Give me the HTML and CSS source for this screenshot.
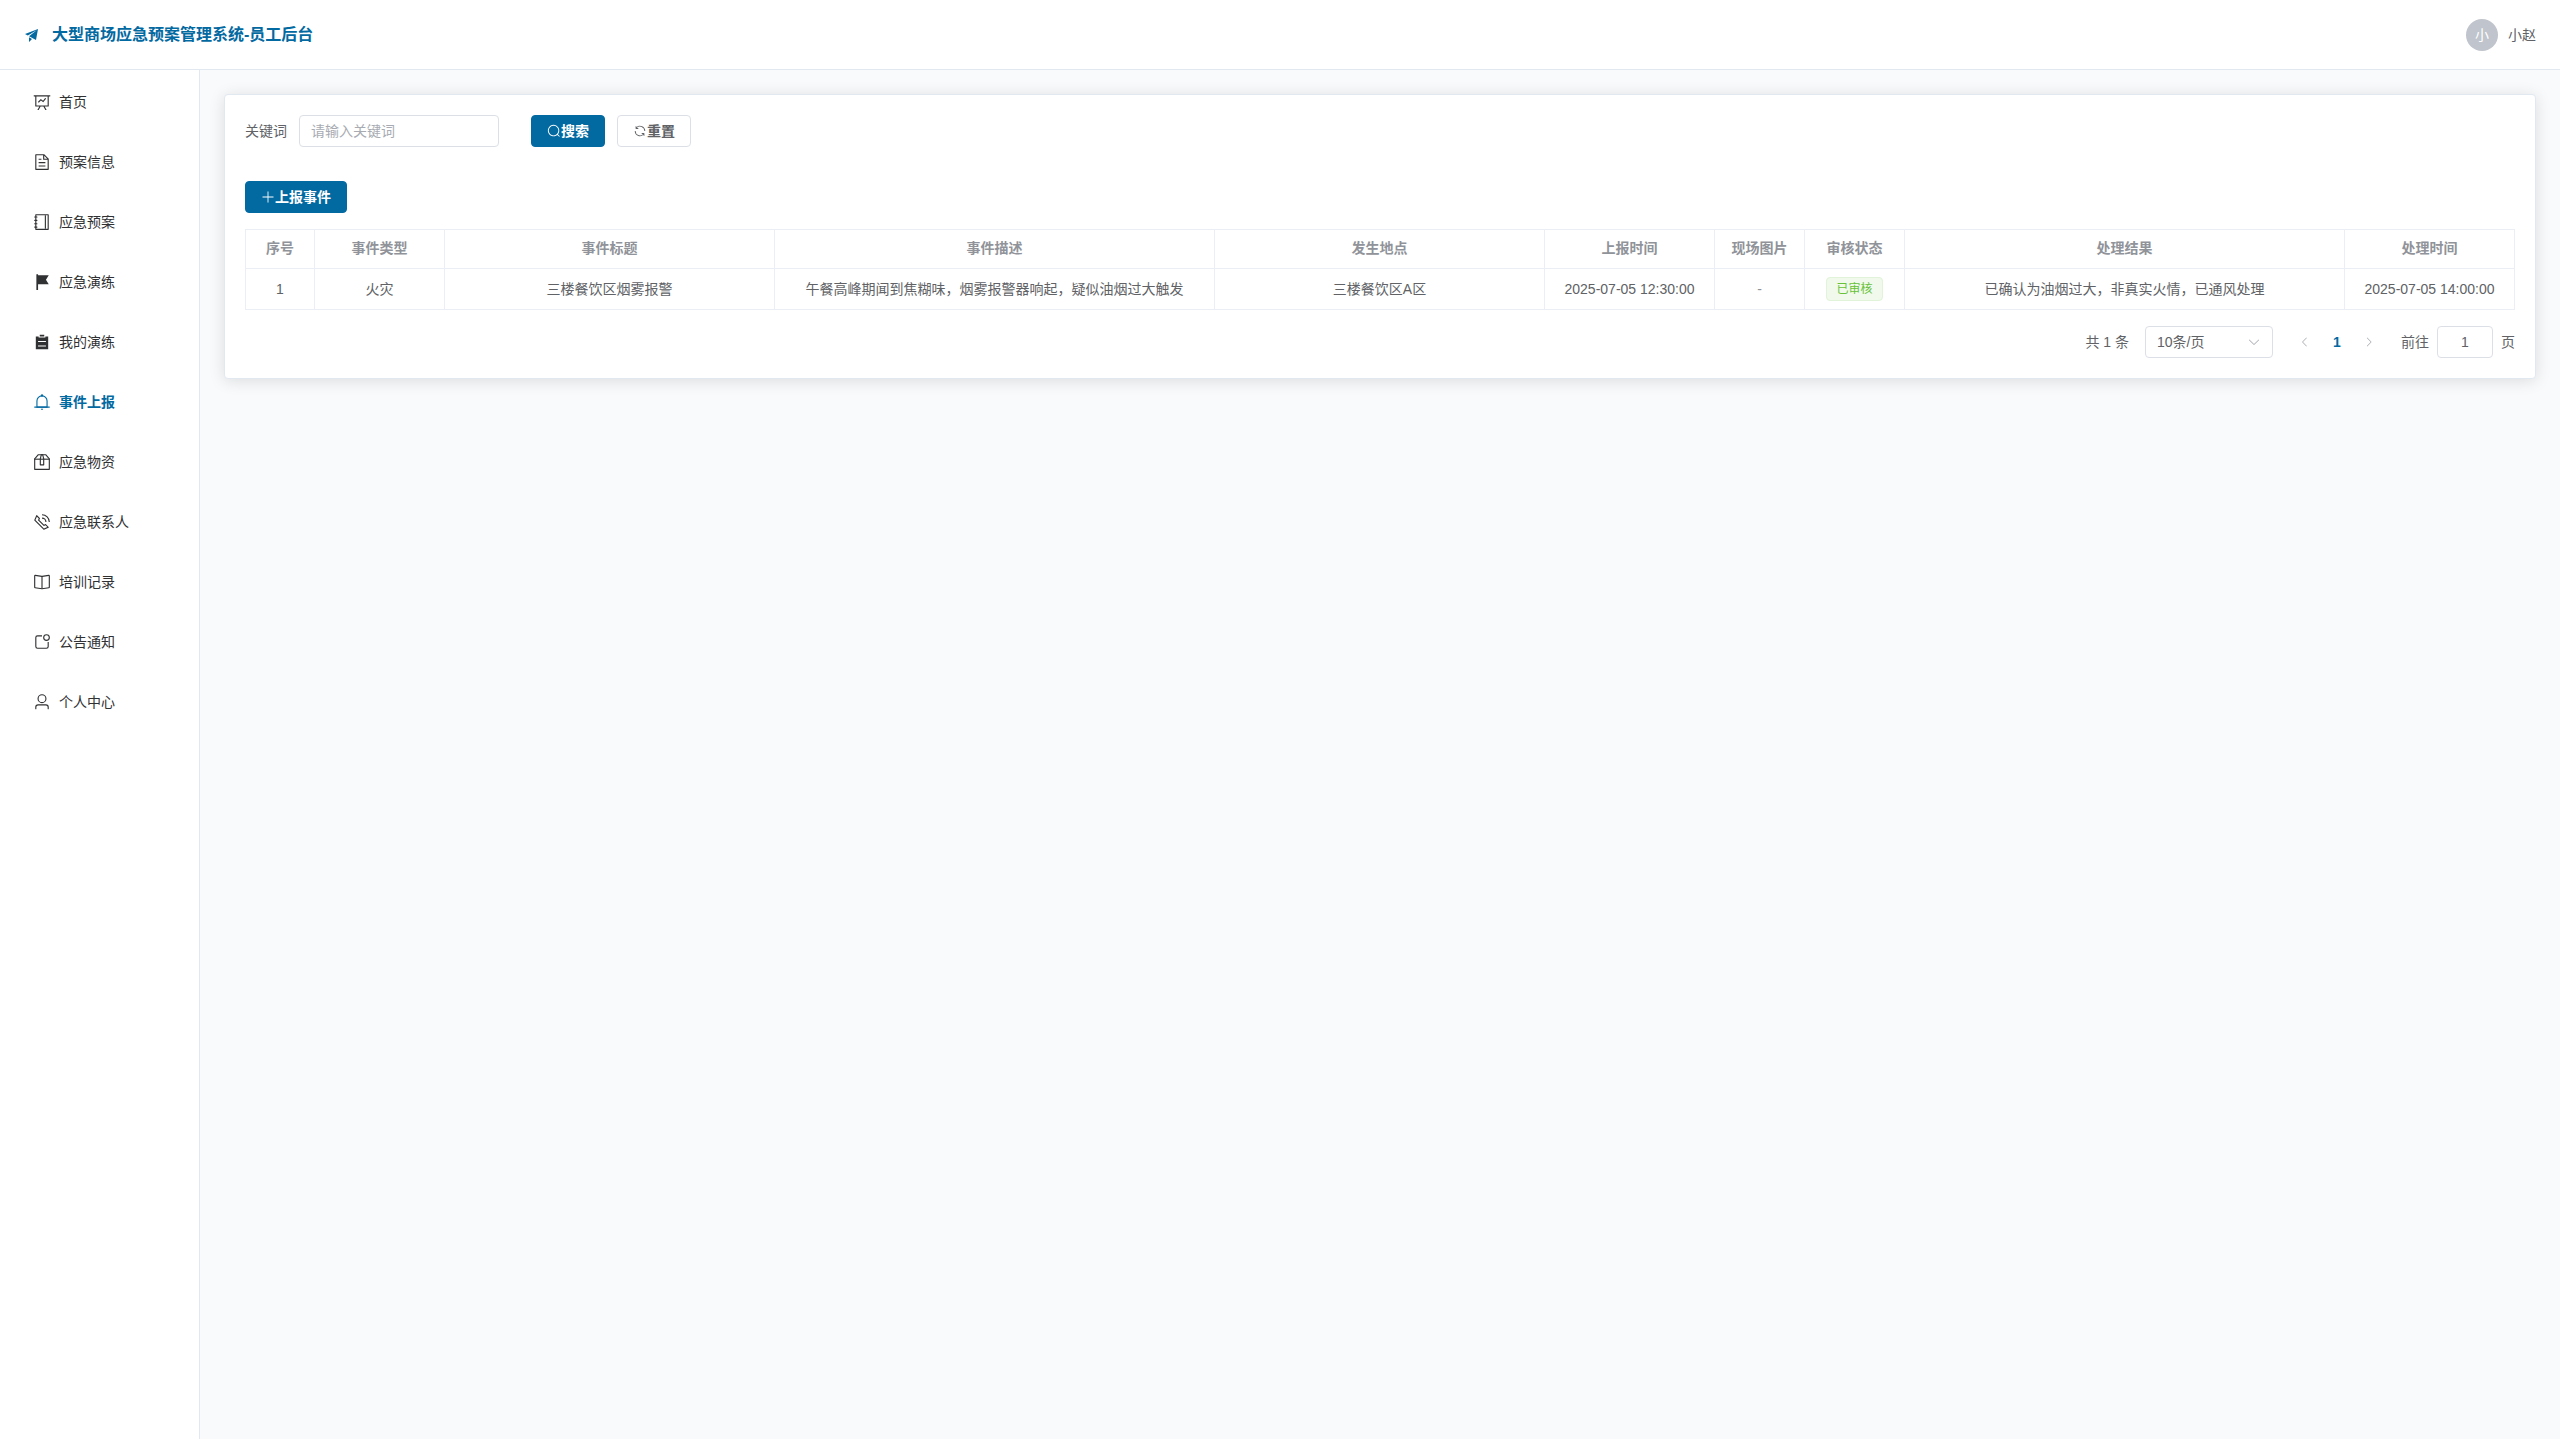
FILE: index.html
```html
<!DOCTYPE html>
<html lang="zh-CN">
<head>
<meta charset="utf-8">
<title>大型商场应急预案管理系统-员工后台</title>
<link rel="stylesheet" href="styles.css">
</head>
<body>
<div class="app">
  <header class="header">
    <div class="brand">
      <svg class="icon icon-brand" viewBox="0 0 1024 1024"><path d="m64 448 832-320-128 704-446.08-243.328L832 192 242.816 545.536zm256 512V657.024L512 768z"/></svg>
      <h1 class="brand-title">大型商场应急预案管理系统-员工后台</h1>
    </div>
    <div class="user"><span class="avatar">小</span><span>小赵</span></div>
  </header>
  <div class="body">
    <nav class="sidebar">
      <a class="menu-item" href="#"><svg class="icon icon-menu" viewBox="0 0 1024 1024"><path d="M359.168 768H160a32 32 0 0 1-32-32V192H64a32 32 0 0 1 0-64h896a32 32 0 1 1 0 64h-64v544a32 32 0 0 1-32 32H665.216l110.848 192h-73.856L591.36 768H433.024L322.176 960H248.32zM832 192H192v512h640zM342.656 534.656a32 32 0 1 1-45.312-45.312L444.992 341.76l125.44 94.08L679.04 300.032a32 32 0 1 1 49.92 39.936L581.632 524.224 451.008 426.24 342.656 534.592z"/></svg>首页</a>
      <a class="menu-item" href="#"><svg class="icon icon-menu" viewBox="0 0 1024 1024"><path d="M832 384H576V128H192v768h640zm-26.496-64L640 154.496V320zM160 64h480l256 256v608a32 32 0 0 1-32 32H160a32 32 0 0 1-32-32V96a32 32 0 0 1 32-32m160 448h384v64H320zm0-192h160v64H320zm0 384h384v64H320z"/></svg>预案信息</a>
      <a class="menu-item" href="#"><svg class="icon icon-menu" viewBox="0 0 1024 1024"><path d="M192 128v768h640V128zm-32-64h704a32 32 0 0 1 32 32v832a32 32 0 0 1-32 32H160a32 32 0 0 1-32-32V96a32 32 0 0 1 32-32"/><path d="M672 128h64v768h-64zM96 192h128q32 0 32 32t-32 32H96q-32 0-32-32t32-32m0 192h128q32 0 32 32t-32 32H96q-32 0-32-32t32-32m0 192h128q32 0 32 32t-32 32H96q-32 0-32-32t32-32m0 192h128q32 0 32 32t-32 32H96q-32 0-32-32t32-32"/></svg>应急预案</a>
      <a class="menu-item" href="#"><svg class="icon icon-menu" viewBox="0 0 1024 1024"><path d="M288 128h608L736 384l160 256H288v320h-96V64h96z"/></svg>应急演练</a>
      <a class="menu-item" href="#"><svg class="icon icon-menu" viewBox="0 0 1024 1024"><path d="M704 192h160v736H160V192h160v64h384zM288 512h448v-64H288zm0 256h448v-64H288zm96-576V96h256v96z"/></svg>我的演练</a>
      <a class="menu-item active" href="#" aria-current="page"><svg class="icon icon-menu" viewBox="0 0 1024 1024"><path d="M512 64a64 64 0 0 1 64 64v64H448v-64a64 64 0 0 1 64-64"/><path d="M256 768h512V448a256 256 0 1 0-512 0zm256-640a320 320 0 0 1 320 320v384H192V448a320 320 0 0 1 320-320"/><path d="M96 768h832q32 0 32 32t-32 32H96q-32 0-32-32t32-32m352 128h128a64 64 0 0 1-128 0"/></svg>事件上报</a>
      <a class="menu-item" href="#"><svg class="icon icon-menu" viewBox="0 0 1024 1024"><path d="M317.056 128 128 344.064V896h768V344.064L706.944 128zm-14.528-64h418.944a32 32 0 0 1 24.064 10.88l206.528 236.096A32 32 0 0 1 960 332.032V928a32 32 0 0 1-32 32H96a32 32 0 0 1-32-32V332.032a32 32 0 0 1 7.936-21.12L278.4 75.008A32 32 0 0 1 302.528 64"/><path d="M64 320h896v64H64z"/><path d="M448 327.872V640h128V327.872L526.08 128h-28.16zM448 64h128l64 256v352a32 32 0 0 1-32 32H416a32 32 0 0 1-32-32V320z"/></svg>应急物资</a>
      <a class="menu-item" href="#"><svg class="icon icon-menu" viewBox="0 0 1024 1024"><path d="M79.36 432.256 591.744 944.64a32 32 0 0 0 35.2 6.784l253.44-108.544a32 32 0 0 0 9.984-52.032l-153.856-153.92a32 32 0 0 0-36.928-6.016l-69.888 34.944L358.08 394.24l35.008-69.888a32 32 0 0 0-5.952-36.928L233.152 133.568a32 32 0 0 0-52.032 10.048L72.512 397.056a32 32 0 0 0 6.784 35.2zm60.48-29.952 81.536-190.08L325.568 316.48l-24.64 49.216-20.608 41.216 32.576 32.64 271.552 271.552 32.64 32.64 41.216-20.672 49.28-24.576 104.192 104.128-190.08 81.472zM512 320v-64a256 256 0 0 1 256 256h-64a192 192 0 0 0-192-192m0-192V64a448 448 0 0 1 448 448h-64a384 384 0 0 0-384-384"/></svg>应急联系人</a>
      <a class="menu-item" href="#"><svg class="icon icon-menu" viewBox="0 0 1024 1024"><path d="m512 863.36 384-54.848v-638.72L525.568 222.72a96 96 0 0 1-27.136 0L128 169.792v638.72zM137.024 106.432l370.432 52.928a32 32 0 0 0 9.088 0l370.432-52.928A64 64 0 0 1 960 169.792v638.72a64 64 0 0 1-54.976 63.36l-388.48 55.488a32 32 0 0 1-9.088 0l-388.48-55.488A64 64 0 0 1 64 808.512v-638.72a64 64 0 0 1 73.024-63.36"/><path d="M480 192h64v704h-64z"/></svg>培训记录</a>
      <a class="menu-item" href="#"><svg class="icon icon-menu" viewBox="0 0 1024 1024"><path d="M512 128v64H256a64 64 0 0 0-64 64v512a64 64 0 0 0 64 64h512a64 64 0 0 0 64-64V512h64v256a128 128 0 0 1-128 128H256a128 128 0 0 1-128-128V256a128 128 0 0 1 128-128z"/><path d="M768 384a128 128 0 1 0 0-256 128 128 0 0 0 0 256m0 64a192 192 0 1 1 0-384 192 192 0 0 1 0 384"/></svg>公告通知</a>
      <a class="menu-item" href="#"><svg class="icon icon-menu" viewBox="0 0 1024 1024"><path d="M512 512a192 192 0 1 0 0-384 192 192 0 0 0 0 384m0 64a256 256 0 1 1 0-512 256 256 0 0 1 0 512m320 320v-96a96 96 0 0 0-96-96H288a96 96 0 0 0-96 96v96a32 32 0 1 1-64 0v-96a160 160 0 0 1 160-160h448a160 160 0 0 1 160 160v96a32 32 0 1 1-64 0"/></svg>个人中心</a>
    </nav>
    <main class="main">
      <section class="card">
        <form class="search-form">
          <div class="field">
            <label for="keyword">关键词</label>
            <input class="input" id="keyword" type="text" placeholder="请输入关键词">
          </div>
          <div class="actions">
            <button class="btn btn-primary" type="button"><svg class="icon" viewBox="0 0 1024 1024"><path d="m795.904 750.72 124.992 124.928a32 32 0 0 1-45.248 45.248L750.656 795.904a416 416 0 1 1 45.248-45.248zM480 832a352 352 0 1 0 0-704 352 352 0 0 0 0 704"/></svg>搜索</button>
            <button class="btn" type="button"><svg class="icon" viewBox="0 0 1024 1024"><path d="M771.776 794.88A384 384 0 0 1 128 512h64a320 320 0 0 0 555.712 216.448H654.72a32 32 0 1 1 0-64h149.056a32 32 0 0 1 32 32v148.928a32 32 0 1 1-64 0v-50.56zM276.288 295.616h92.992a32 32 0 0 1 0 64H220.16a32 32 0 0 1-32-32V178.56a32 32 0 0 1 64 0v50.56A384 384 0 0 1 896.128 512h-64a320 320 0 0 0-555.776-216.384z"/></svg>重置</button>
          </div>
        </form>
        <div class="toolbar">
          <button class="btn btn-primary" type="button"><svg class="icon" viewBox="0 0 1024 1024"><path d="M480 480V128a32 32 0 0 1 64 0v352h352a32 32 0 1 1 0 64H544v352a32 32 0 1 1-64 0V544H128a32 32 0 0 1 0-64z"/></svg>上报事件</button>
        </div>
        <table class="table">
          <colgroup><col class="w-index"><col class="w-type"><col class="w-text"><col class="w-long"><col class="w-text"><col class="w-time"><col class="w-image"><col class="w-status"><col class="w-long"><col class="w-time"></colgroup>
          <thead>
            <tr><th>序号</th><th>事件类型</th><th>事件标题</th><th>事件描述</th><th>发生地点</th><th>上报时间</th><th>现场图片</th><th>审核状态</th><th>处理结果</th><th>处理时间</th></tr>
          </thead>
          <tbody>
            <tr><td>1</td><td>火灾</td><td>三楼餐饮区烟雾报警</td><td>午餐高峰期闻到焦糊味，烟雾报警器响起，疑似油烟过大触发</td><td>三楼餐饮区A区</td><td>2025-07-05 12:30:00</td><td class="empty">-</td><td><span class="tag">已审核</span></td><td>已确认为油烟过大，非真实火情，已通风处理</td><td>2025-07-05 14:00:00</td></tr>
          </tbody>
        </table>
        <div class="pagination">
          <span>共 1 条</span>
          <div class="select-wrap">
            <select class="select" aria-label="每页条数"><option>10条/页</option></select>
            <svg class="icon select-arrow" viewBox="0 0 1024 1024"><path d="M831.872 340.864 512 652.672 192.128 340.864a30.592 30.592 0 0 0-42.752 0 29.12 29.12 0 0 0 0 41.6L489.664 714.24a32 32 0 0 0 44.672 0l340.288-331.712a29.12 29.12 0 0 0 0-41.728 30.592 30.592 0 0 0-42.752 0z"/></svg>
          </div>
          <div class="pager">
            <button class="page-btn" type="button" disabled aria-label="上一页"><svg class="icon icon-page" viewBox="0 0 1024 1024"><path d="M609.408 149.376 277.76 489.6a32 32 0 0 0 0 44.672l331.648 340.352a29.12 29.12 0 0 0 41.728 0 30.592 30.592 0 0 0 0-42.752L339.264 511.936l311.872-319.872a30.592 30.592 0 0 0 0-42.688 29.12 29.12 0 0 0-41.728 0"/></svg></button>
            <button class="page-btn current" type="button">1</button>
            <button class="page-btn" type="button" disabled aria-label="下一页"><svg class="icon icon-page" viewBox="0 0 1024 1024"><path d="M340.864 149.312a30.592 30.592 0 0 0 0 42.752L652.736 512 340.864 831.872a30.592 30.592 0 0 0 0 42.752 29.12 29.12 0 0 0 41.728 0L714.24 534.336a32 32 0 0 0 0-44.672L382.592 149.376a29.12 29.12 0 0 0-41.728 0z"/></svg></button>
          </div>
          <div class="jump">
            <label for="page">前往</label>
            <input class="input input-page" id="page" type="text" value="1">
            <span>页</span>
          </div>
        </div>
      </section>
    </main>
  </div>
</div>
</body>
</html>
```
FILE: styles.css
```css
* { box-sizing: border-box; }

body {
  margin: 0;
  font-family: "Liberation Sans", "Noto Sans CJK SC", sans-serif;
  font-size: 14px;
  line-height: 22px;
  color: #606266;
  background: #f8fafc;
}

button, input, select { font: inherit; color: inherit; }

.icon { width: 14px; height: 14px; flex: none; fill: currentColor; }

.app { display: flex; flex-direction: column; min-height: 100vh; }

.header {
  display: flex;
  align-items: center;
  justify-content: space-between;
  height: 70px;
  padding: 0 24px;
  background: #fff;
  border-bottom: 1px solid #e2e8f0;
}
.brand { display: flex; align-items: center; gap: 12px; color: #0369a1; }
.icon-brand { width: 16px; height: 16px; }
.brand-title { margin: 0; font-size: 16px; font-weight: 700; }
.user { display: flex; align-items: center; gap: 10px; }
.avatar {
  width: 32px;
  height: 32px;
  border-radius: 50%;
  background: #c0c4cc;
  color: #fff;
  line-height: 32px;
  text-align: center;
}

.body { display: flex; flex: 1; }
.sidebar {
  display: flex;
  flex-direction: column;
  gap: 4px;
  flex: none;
  width: 200px;
  padding: 4px 10px;
  background: #fff;
  border-right: 1px solid #e2e8f0;
}
.menu-item {
  display: flex;
  align-items: center;
  gap: 8px;
  height: 56px;
  padding: 0 23px;
  color: #303133;
  text-decoration: none;
}
.menu-item.active { color: #0369a1; font-weight: 700; }
.icon-menu { width: 18px; height: 18px; }

.main { flex: 1; min-width: 0; padding: 24px; }
.card {
  padding: 20px;
  background: #fff;
  border: 1px solid #e2e8f0;
  border-radius: 4px;
  box-shadow: 0 2px 16px rgba(0, 0, 0, 0.12);
}

.search-form { display: flex; gap: 32px; margin-bottom: 34px; }
.field { display: flex; align-items: center; gap: 12px; }
.input {
  width: 200px;
  height: 32px;
  padding: 0 11px;
  background: #fff;
  border: 1px solid #dcdfe6;
  border-radius: 4px;
}
.input::placeholder { color: #a8abb2; }
.actions { display: flex; gap: 12px; }
.btn {
  display: flex;
  align-items: center;
  height: 32px;
  padding: 0 15px;
  background: #fff;
  border: 1px solid #dcdfe6;
  border-radius: 4px;
  font-weight: 700;
}
.btn-primary { background: #0369a1; border-color: #0369a1; color: #fff; }
.toolbar { display: flex; margin-bottom: 16px; }

.table {
  width: 100%;
  table-layout: fixed;
  border-collapse: separate;
  border-spacing: 0;
  border-left: 1px solid #ebeef5;
  text-align: center;
}
.table th, .table td {
  height: 41px;
  padding: 0;
  border-right: 1px solid #ebeef5;
  border-bottom: 1px solid #ebeef5;
}
.table th {
  height: 40px;
  padding-bottom: 2px;
  border-top: 1px solid #ebeef5;
  color: #909399;
  font-weight: 700;
}
.w-index { width: 69px; }
.w-type { width: 130px; }
.w-text { width: 330px; }
.w-long { width: 440px; }
.w-time { width: 170px; }
.w-image { width: 90px; }
.w-status { width: 100px; }
.table .empty { color: #909399; }
.tag {
  display: inline-block;
  height: 24px;
  padding: 0 9px;
  background: #f0f9eb;
  border: 1px solid #e1f3d8;
  border-radius: 4px;
  color: #67c23a;
  font-size: 12px;
  line-height: 22px;
  vertical-align: middle;
}

.pagination {
  display: flex;
  align-items: center;
  justify-content: flex-end;
  gap: 16px;
  margin-top: 16px;
}
.select-wrap { position: relative; width: 128px; }
.select {
  appearance: none;
  display: block;
  width: 100%;
  height: 32px;
  padding: 0 11px;
  background: #fff;
  border: 1px solid #dcdfe6;
  border-radius: 4px;
}
.select-arrow { position: absolute; top: 9px; right: 12px; color: #a8abb2; pointer-events: none; }
.pager { display: flex; }
.page-btn {
  display: flex;
  align-items: center;
  justify-content: center;
  width: 32px;
  height: 32px;
  padding: 0;
  background: none;
  border: 0;
}
.page-btn:disabled { color: #a8abb2; }
.page-btn.current { color: #0369a1; font-weight: 700; }
.icon-page { width: 12px; height: 12px; }
.jump { display: flex; align-items: center; gap: 8px; }
.input-page { width: 56px; text-align: center; }
```
